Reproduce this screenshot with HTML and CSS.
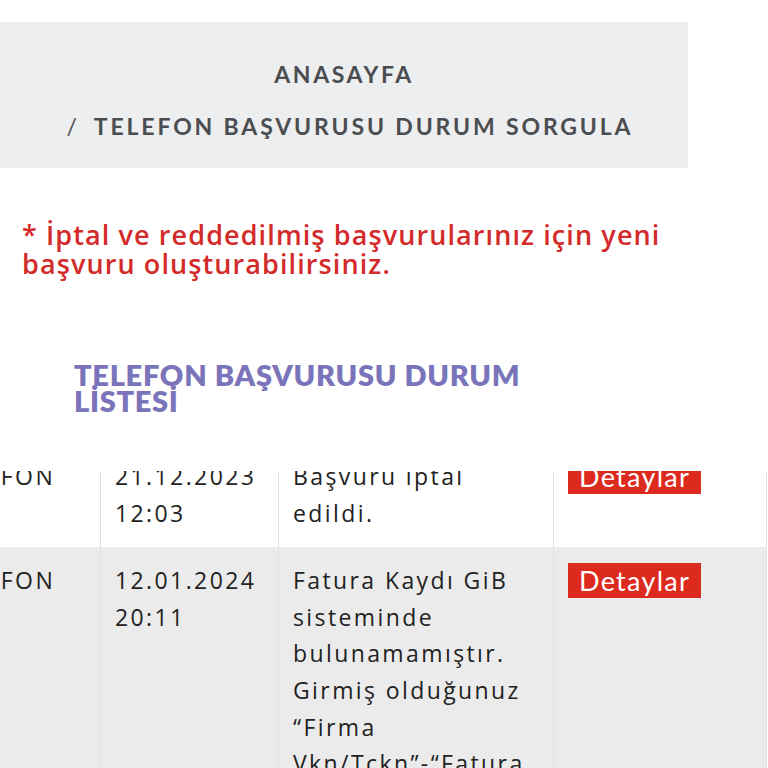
FILE: index.html
```html
<!DOCTYPE html>
<html lang="tr">
<head>
<meta charset="utf-8">
<title>Telefon Başvurusu Durum Sorgula</title>
<link rel="stylesheet" href="styles.css">
</head>
<body>
<nav class="crumbs">
  <div class="crumb">ANASAYFA</div>
  <div class="crumb crumb-current"><span class="sep">/</span>TELEFON BAŞVURUSU DURUM SORGULA</div>
</nav>
<p class="notice">* İptal ve reddedilmiş başvurularınız için yeni başvuru oluşturabilirsiniz.</p>
<h2 class="list-title">TELEFON BAŞVURUSU DURUM LİSTESİ</h2>
<div class="table-window">
  <table class="status-table">
    <tr>
      <td class="c-type">TELEFON</td>
      <td class="c-date">21.12.2023 12:03</td>
      <td class="c-desc">Başvuru iptal edildi.</td>
      <td class="c-act"><span class="btn">Detaylar</span></td>
    </tr>
    <tr class="alt">
      <td class="c-type">TELEFON</td>
      <td class="c-date">12.01.2024 20:11</td>
      <td class="c-desc">Fatura Kaydı GiB sisteminde bulunamamıştır. Girmiş olduğunuz “Firma Vkn/Tckn”-“Fatura Numarası” bilgilerini kontrol ediniz.</td>
      <td class="c-act"><span class="btn">Detaylar</span></td>
    </tr>
  </table>
</div>
</body>
</html>
```

FILE: styles.css
```css
html, body {
  margin: 0;
  padding: 0;
  background: #ffffff;
  overflow: hidden;
}
body {
  font-family: Lato, "Open Sans", sans-serif;
  height: 768px;
}
.crumbs {
  margin-top: 22px;
  width: 688px;
  height: 146px;
  box-sizing: border-box;
  background: #eceeef;
  display: flex;
  flex-direction: column;
  align-items: center;
  justify-content: center;
  gap: 24px;
  padding-top: 9px;
}
.crumb {
  font-size: 23px;
  font-weight: 700;
  color: #4b4d50;
  letter-spacing: 2.6px;
  line-height: 28px;
}
.crumb-current {
  letter-spacing: 2.85px;
  margin-left: 12px;
}
.crumb .sep {
  font-weight: 400;
  margin-right: 14px;
}
.notice {
  margin: 52px 0 0 22px;
  font-family: "Open Sans", Lato, sans-serif;
  font-size: 27px;
  line-height: 29px;
  color: #d32a2a;
  letter-spacing: 1.1px;
  width: 680px;
  font-weight: 600;
}
.list-title {
  margin: 84px 0 0 74px;
  width: 470px;
  font-size: 29px;
  line-height: 26px;
  font-weight: 800;
  color: #7a74ba;
  letter-spacing: 0.7px;
}
.table-window {
  margin-top: 57px;
  height: 300px;
  overflow: hidden;
}
.status-table {
  border-collapse: collapse;
  margin-top: -28px;
  margin-left: -77px;
  font-family: "Open Sans", Lato, sans-serif;
  font-size: 23px;
  line-height: 36.6px;
  color: #222;
  letter-spacing: 2.4px;
}
.status-table td {
  vertical-align: top;
  padding: 15px 14px 16px 14px;
  border-left: 1px solid #e2e2e2;
  border-right: 1px solid #e2e2e2;
}
.status-table td.c-type {
  padding-left: 17px;
  padding-right: 2px;
}
.status-table tr.alt td {
  background: #ebebeb;
}
.c-type { width: 157px; }
.c-date { width: 149px; }
.c-desc { width: 246px; }
.c-act { width: 184px; }
.btn {
  display: inline-block;
  background: #dc2a1f;
  color: #fff;
  font-family: Lato, sans-serif;
  font-size: 27px;
  line-height: 35px;
  letter-spacing: 1.3px;
  padding: 0 11px 0 11px;
  margin-top: 1px;
}
```
